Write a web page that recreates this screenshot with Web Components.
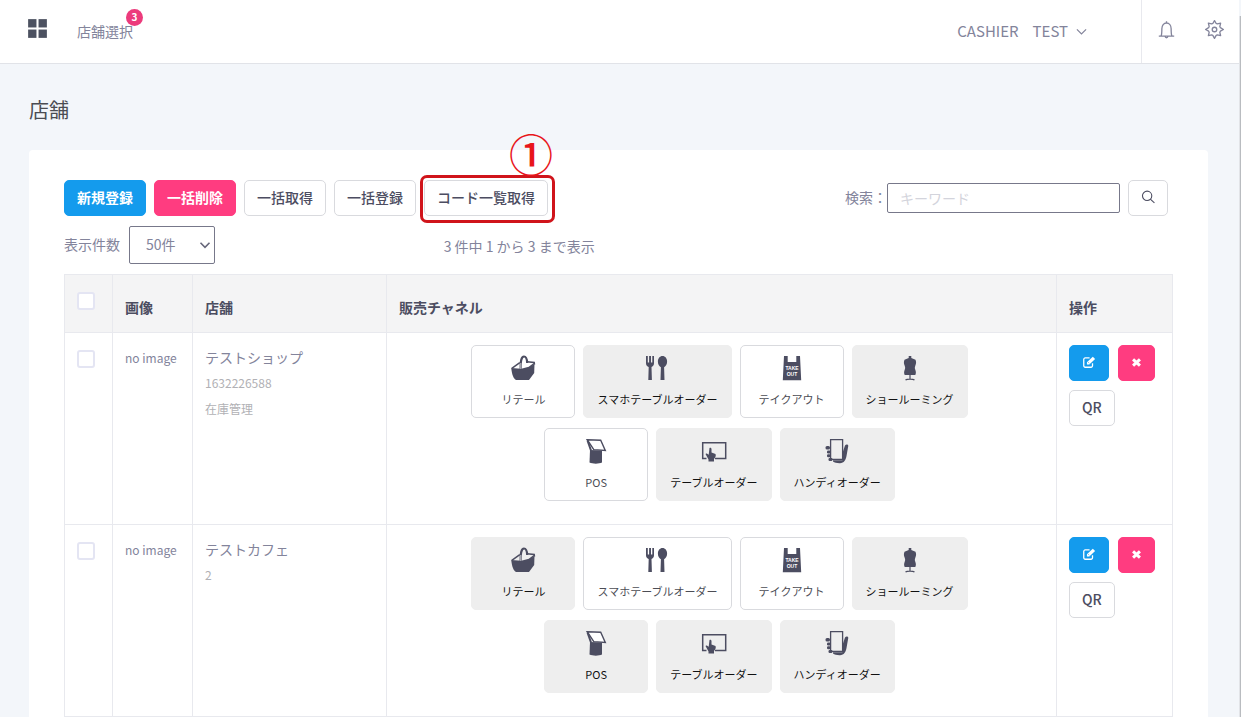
<!DOCTYPE html>
<html lang="ja">
<head>
<meta charset="utf-8">
<title>店舗</title>
<style>
  html, body { margin: 0; height: 100%; }
  body {
    font: 14px/20px "Noto Sans CJK JP", "Noto Sans", sans-serif;
    color: #83849b;
    background: #f3f6fa;
    --ink: #4c4d61;
    --line: #e8e9ee;
    --control: #d9dade;
    --blue: #149bed;
    --pink: #ff3c80;
    --red: #d0141b;
  }
</style>
</head>
<body>
<store-app></store-app>

<script>
const define = (name, html, setup) => {
  const template = document.createElement('template');
  template.innerHTML = html;
  customElements.define(name, class extends HTMLElement {
    connectedCallback() {
      if (this.shadowRoot) return;
      this.attachShadow({ mode: 'open' }).append(template.content.cloneNode(true));
      if (setup) setup.call(this, this.shadowRoot);
    }
  });
};

const ICONS = {
  grid: '<g fill="#4c5160"><rect x="3" y="3" width="8" height="8"/><rect x="13" y="3" width="8" height="8"/><rect x="3" y="13" width="8" height="8"/><rect x="13" y="13" width="8" height="8"/></g>',
  bell: '<path d="M3.200 19.500h17.600M5.800 19.300c.9-1.500.9-3.500.9-8.200C6.700 7.300 8.900 4.600 12 4.600s5.300 2.700 5.300 6.500c0 4.700 0 6.700.9 8.200M12 2.600v2M10.400 20c.3 1.900 2.900 1.900 3.200 0" fill="none" stroke="currentColor" stroke-width="1.500"/>',
  gear: '<g fill="none" stroke="currentColor" stroke-width="1.500" stroke-linejoin="round"><circle cx="12" cy="12" r="2.600"/><path d="M12 1.800l1.900 3.300 1.300.5 3.800-.8-.9 3.800.6 1.300L22.200 12l-3.500 1.900-.6 1.300.9 3.800-3.800-.8-1.300.5-1.900 3.500-1.900-3.500-1.300-.5-3.800.8.9-3.800-.6-1.300L1.800 12l3.500-2.100.6-1.300L5 4.800l3.800.8 1.300-.5z"/></g>',
  chevron: '<path d="M2 7.500l10 10 10-10" fill="none" stroke="currentColor" stroke-width="2.600"/>',
  down: '<path d="M3 7.500l9 9 9-9" fill="none" stroke="currentColor" stroke-width="3.200"/>',
  search: '<g fill="none" stroke="#4c4d61" stroke-width="1.900"><circle cx="10.500" cy="10" r="8"/><path d="M16 15.700l7 6.300"/></g>',
  edit: '<path d="M18 14v4.500a2.500 2.500 0 0 1-2.500 2.500h-10A2.500 2.500 0 0 1 3 18.500v-11A2.500 2.500 0 0 1 5.500 5H13" fill="none" stroke="#fff" stroke-width="2.200"/><path fill="#fff" d="M8.500 12.300L18.500 2.800l4 4-10 9.500h-4z"/><path d="M10.500 12.200l2 2" stroke="#149bed" stroke-width="1"/>',
  cross: '<path d="M4.500 5l15 14M19.500 5l-15 14" stroke="#fff" stroke-width="6.500"/>',
  basket: '<path fill="#4c4d61" d="M1.200 13l10 .8 9.500-2.600 3.800-2.500-.3 9.300-5.200 7H6.200C3.500 24 2 19.500 1.200 13z"/><path d="M1.800 13.300l8-5.600M24.500 9.500l-.3-2-7.200-.8M19.500 12l4.700-3.500" fill="none" stroke="#4c4d61" stroke-width="1.500"/><path d="M10.800 15C10.300 6 11.500 1.500 14 1.500c2.200 0 3 2.600 3.200 6.500" fill="none" stroke="#4c4d61" stroke-width="2.200"/><path d="M10.800 14V8" stroke="#fff" stroke-width=".7"/>',
  cutlery: '<path fill="#4c4d61" d="M2 1h1.800v6.500h1.300V1h1.900v6.500h1.300V1H10v7.200c0 2.200-1.300 3.300-2.500 3.900l.4 13H4.300l.4-13C3.300 11.500 2 10.400 2 8.200z"/><path fill="#4c4d61" d="M18.500 1c2.700 0 4.600 2.400 4.600 5.500 0 2.700-1.300 4.800-3 5.700l.4 12.900h-4l.4-12.900c-1.800-.9-3-3-3-5.700C13.900 3.400 15.800 1 18.500 1z"/>',
  bag: '<path fill="#4c4d61" d="M5 1h3.700v6h8.600V1H21l1.200 24.300H3.800z"/><g fill="#fff" font-family="Liberation Sans, sans-serif" font-weight="700" font-size="5" text-anchor="middle"><text x="13" y="15">TAKE</text><text x="13" y="21">OUT</text></g>',
  mannequin: '<path fill="#4c4d61" d="M11.700 1h2.600v2l4.200 1.700c1 2.500.6 4-.2 6-.6 1.700-.6 2.500 0 4 .8 2.200.8 3.600 0 5.300H7.700c-.8-1.700-.8-3.100 0-5.300.6-1.500.6-2.300 0-4-.8-2-1.200-3.500-.2-6L11.700 3z"/><path d="M13 20v4.500M8.500 25c1.500-1.300 7.500-1.300 9 0" fill="none" stroke="#4c4d61" stroke-width="1.200"/>',
  pos: '<path fill="#4c4d61" d="M7 12l12 .5v12c-3 1.500-9.500 1.500-12.500 0z"/><path d="M4.200 1.700l13.500.5 4.600 10.200-11.500-.8z" fill="#fff" stroke="#4c4d61" stroke-width="1.400"/><path d="M4.500 2.500L8 12.500" stroke="#4c4d61" stroke-width="2"/>',
  tablet: '<path d="M5.500 20.500H1.700V4.700h23v15.800H14" fill="none" stroke="#4c4d61" stroke-width="1.500"/><path fill="#4c4d61" d="M8.500 10c1-.8 2 0 2 1v3.500l4 1.500c.7 1.500 0 3.500-1.500 5v2.500H7.500v-2L4.500 16c.5-1 1.500-.5 3.200.8z"/>',
  handy: '<path d="M6.600 1.700h12v19.600h-12z" fill="none" stroke="#4c4d61" stroke-width="1.300"/><g fill="#4c4d61"><rect x="1.500" y="8" width="4.500" height="3.500" rx="1.500"/><rect x="3" y="12.500" width="3.500" height="3" rx="1.200"/><rect x="3" y="16.300" width="3.500" height="3" rx="1.200"/><rect x="4.500" y="20" width="4" height="3" rx="1.200"/><path d="M9 22.300h9.500V15L21 7.500c1-1.500 3-1.300 3.300.2L22.500 18c-.7 4-2.500 7-6.500 7.200-3 .1-5.500-.7-7-1.700z"/></g>'
};

define('ui-icon', `
  <style>
    :host { display: block; width: 24px; height: 24px; }
    svg { display: block; width: 100%; height: 100%; }
  </style>`, function (root) {
  const box = this.getAttribute('box') || 24;
  root.innerHTML += `<svg viewBox="0 0 ${box} ${box}" aria-hidden="true">${ICONS[this.getAttribute('name')]}</svg>`;
});

define('ui-button', `
  <style>
    :host { display: block; }
    button {
      box-sizing: border-box; width: 100%; height: 36px; padding: 0 12px 2px;
      display: flex; align-items: center; justify-content: center;
      border: 1px solid var(--control); border-radius: 5px; background: #fff;
      color: var(--ink); font: 500 14px/20px "Noto Sans CJK JP", sans-serif; white-space: nowrap;
    }
    :host([kind=primary]) button { background: var(--blue); border-color: var(--blue); color: #fff; font-weight: 700; }
    :host([kind=danger]) button { background: var(--pink); border-color: var(--pink); color: #fff; font-weight: 700; }
  </style>
  <button type="button"><slot></slot></button>`, function (root) {
  if (this.hasAttribute('label')) root.querySelector('button').setAttribute('aria-label', this.getAttribute('label'));
});

define('callout-mark', `
  <style>
    :host { display: block; position: relative; }
    .ring { position: absolute; inset: -5px -7px -7px -4px; border: 3px solid var(--red); border-radius: 7px; pointer-events: none; }
    .number {
      position: absolute; right: -5px; bottom: 39px; width: 44px;
      color: #e8151b; font: 500 44px/48px "Noto Sans CJK JP", sans-serif; text-align: center;
    }
  </style>
  <slot></slot><div class="ring"></div><div class="number">①</div>`);

define('app-header', `
  <style>
    :host { display: flex; align-items: stretch; height: 63px; background: #fff; border-bottom: 1px solid #e1e3e8; }
    a { color: inherit; text-decoration: none; }
    nav { display: flex; align-items: center; gap: 27px; padding: 0 0 2px 25px; flex: 1; }
    .menu { width: 25px; height: 25px; margin-bottom: 4px; }
    .store { position: relative; }
    .badge {
      position: absolute; left: 49px; bottom: 15px; width: 17px; height: 17px; border-radius: 50%;
      background: #ec3b7c; color: #fff; font: 700 10px/16px "Noto Sans CJK JP", sans-serif; text-align: center;
    }
    button { border: 0; padding: 0; background: none; color: inherit; font: inherit; }
    .account { display: flex; align-items: center; gap: 8px; padding: 0 54px 2px 0; font-size: 15px; }
    .account span + span { margin-left: 6px; }
    .account ui-icon { width: 11px; height: 11px; margin-top: 2px; }
    .tools { display: flex; align-items: center; justify-content: space-between; border-left: 1px solid var(--line); padding: 0 14px 4px; width: 69px; }
    .tools ui-icon { width: 21px; height: 21px; }
  </style>
  <nav>
    <a href="#menu" aria-label="メニュー"><ui-icon class="menu" name="grid"></ui-icon></a>
    <a class="store" href="#stores">店舗選択<span class="badge">3</span></a>
  </nav>
  <button class="account" type="button"><span>CASHIER</span><span>TEST</span><ui-icon name="chevron"></ui-icon></button>
  <div class="tools">
    <button type="button" aria-label="通知"><ui-icon name="bell"></ui-icon></button>
    <button type="button" aria-label="設定"><ui-icon name="gear"></ui-icon></button>
  </div>`);

define('list-toolbar', `
  <style>
    :host { display: grid; gap: 10px; margin-bottom: 10px; }
    .bar { display: flex; align-items: center; justify-content: space-between; padding-right: 5px; }
    .actions, .search { display: flex; align-items: center; gap: 8px; }
    .search label { margin-right: -8px; padding-bottom: 2px; }
    input {
      box-sizing: border-box; width: 233px; height: 30px; padding: 0 12px;
      border: 1px solid #77788a; border-radius: 2px; background: #fff; color: inherit; font: inherit;
    }
    input::placeholder { color: #d3d4dc; }
    .search ui-button { width: 40px; }
    .search ui-icon { width: 16px; height: 16px; }
    .paging { display: grid; grid-template-columns: 1fr 2fr; align-items: center; }
    .size { display: flex; align-items: center; gap: 9px; }
    .size label { padding-bottom: 2px; }
    .info { padding: 2px 0 0 10px; }
    .select { position: relative; width: 86px; }
    select {
      appearance: none; box-sizing: border-box; display: block; width: 100%; height: 38px; padding: 0 16px 2px;
      border: 1px solid #77788a; border-radius: 2px; background: #fff; color: inherit; font: inherit;
    }
    .select ui-icon { position: absolute; right: 4px; top: 13px; width: 12px; height: 12px; color: #66677a; pointer-events: none; }
  </style>
  <div class="bar">
    <div class="actions">
      <ui-button kind="primary">新規登録</ui-button>
      <ui-button kind="danger">一括削除</ui-button>
      <ui-button>一括取得</ui-button>
      <ui-button>一括登録</ui-button>
      <callout-mark><ui-button>コード一覧取得</ui-button></callout-mark>
    </div>
    <div class="search">
      <label for="keyword">検索：</label>
      <input id="keyword" type="text" placeholder="キーワード">
      <ui-button label="検索"><ui-icon name="search"></ui-icon></ui-button>
    </div>
  </div>
  <div class="paging">
    <div class="size">
      <label for="size">表示件数</label>
      <div class="select">
        <select id="size"><option>50件</option></select>
        <ui-icon name="down"></ui-icon>
      </div>
    </div>
    <div class="info">3 件中 1 から 3 まで表示</div>
  </div>`);

define('channel-card', `
  <style>
    :host { display: block; min-width: 104px; }
    button {
      box-sizing: border-box; width: 100%; height: 73px; padding: 9px 13px 10px;
      display: flex; flex-direction: column; align-items: center; justify-content: space-between;
      border: 1px solid var(--control); border-radius: 5px; background: #fff;
      color: #4c4d55; font: 11px/16px "Noto Sans CJK JP", sans-serif; white-space: nowrap;
    }
    :host([off]) button { background: #eee; border-color: #eee; color: #111; }
    ui-icon { width: 26px; height: 26px; }
  </style>
  <button type="button"><span class="icon"></span><slot></slot></button>`, function (root) {
  root.querySelector('.icon').innerHTML = `<ui-icon box="26" name="${this.getAttribute('icon')}"></ui-icon>`;
});

const CHANNELS = [
  ['basket', 'リテール'], ['cutlery', 'スマホテーブルオーダー'], ['bag', 'テイクアウト'], ['mannequin', 'ショールーミング'],
  ['pos', 'POS'], ['tablet', 'テーブルオーダー'], ['handy', 'ハンディオーダー']
];
const STORES = [
  { name: 'テストショップ', notes: ['1632226588', '在庫管理'], active: ['basket', 'bag', 'pos'] },
  { name: 'テストカフェ', notes: ['2'], active: ['cutlery', 'bag'] }
];

define('store-table', `
  <style>
    :host { display: block; }
    table { width: 100%; table-layout: fixed; border-collapse: collapse; }
    th, td { border: 1px solid var(--line); padding: 0 12px; text-align: left; vertical-align: top; }
    th { background: #f4f4f5; color: var(--ink); font-weight: 700; padding-top: 22px; padding-bottom: 15px; }
    td { padding-top: 12px; padding-bottom: 23px; }
    th.check, td.check { padding-top: 17px; }
    .c-check { width: 48px; } .c-image { width: 80px; } .c-store { width: 194px; } .c-action { width: 116px; }
    input {
      appearance: none; display: block; box-sizing: border-box; width: 18px; height: 18px; margin: 0;
      border: 2px solid #e4e5f3; border-radius: 3px; background: #fff;
    }
    td.image { font-size: 12px; padding-top: 15px; white-space: nowrap; }
    .name { padding-top: 2px; }
    .note { padding-top: 6px; font-size: 12px; color: #b1b1b5; }
    .channels { display: flex; flex-wrap: wrap; justify-content: center; gap: 10px 8px; max-width: 560px; margin: 0 auto; padding-right: 4px; }
    .ops { display: flex; flex-wrap: wrap; gap: 9px; }
    .ops ui-icon { width: 14px; height: 14px; }
    .ops .x { width: 11px; height: 11px; }
  </style>
  <table>
    <colgroup><col class="c-check"><col class="c-image"><col class="c-store"><col><col class="c-action"></colgroup>
    <thead><tr>
      <th class="check"><input type="checkbox" aria-label="すべて選択"></th>
      <th>画像</th><th>店舗</th><th>販売チャネル</th><th>操作</th>
    </tr></thead>
    <tbody></tbody>
  </table>`, function (root) {
  root.querySelector('tbody').innerHTML = STORES.map(s => `
    <tr>
      <td class="check"><input type="checkbox" aria-label="${s.name}"></td>
      <td class="image">no image</td>
      <td><div class="name">${s.name}</div>${s.notes.map(n => `<div class="note">${n}</div>`).join('')}</td>
      <td><div class="channels">${CHANNELS.map(([icon, label]) =>
        `<channel-card icon="${icon}"${s.active.includes(icon) ? '' : ' off'}>${label}</channel-card>`).join('')}</div></td>
      <td><div class="ops">
        <ui-button kind="primary" label="編集"><ui-icon name="edit"></ui-icon></ui-button>
        <ui-button kind="danger" label="削除"><ui-icon class="x" name="cross"></ui-icon></ui-button>
        <ui-button>QR</ui-button>
      </div></td>
    </tr>`).join('');
});

define('store-app', `
  <style>
    :host { display: grid; grid-template-columns: minmax(0, 1fr) 2px; height: 100vh; overflow: hidden; }
    main { padding: 33px 31px 30px 29px; }
    h1 { margin: 0 0 27px; font-size: 20px; line-height: 26px; font-weight: 400; color: #4b4c52; }
    section { padding: 30px 35px; border-radius: 4px; background: #fff; }
    .track { margin-top: 16px; background: #b9bcc0; border-left: 1px solid #e2e4e8; }
  </style>
  <div>
    <app-header></app-header>
    <main>
      <h1>店舗</h1>
      <section><list-toolbar></list-toolbar><store-table></store-table></section>
    </main>
  </div>
  <div class="track"></div>`);
</script>
</body>
</html>
